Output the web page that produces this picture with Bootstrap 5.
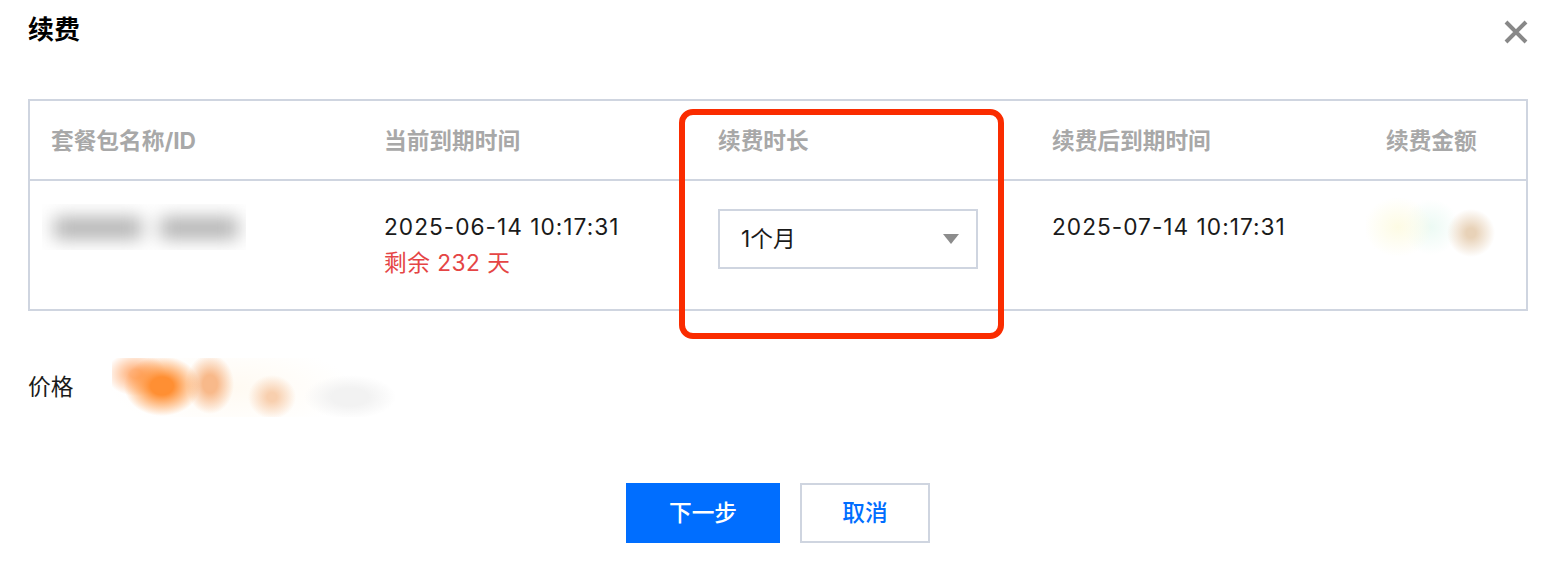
<!DOCTYPE html>
<html lang="zh-CN">
<head>
    <meta charset="UTF-8">
    <meta name="viewport" content="width=device-width, initial-scale=1.0">
    <title>续费</title>
    <link href="https://cdn.jsdelivr.net/npm/bootstrap@5.3.1/dist/css/bootstrap.min.css" rel="stylesheet">
    <style>
        body {
            font-family: Inter, "Noto Sans CJK SC", sans-serif;
            font-size: 22.7px;
            color: #1a1a1a;
            background: #fff;
            overflow: hidden;
        }
        .renew-page {
            position: relative;
            height: 562px;
            padding: 0 25px 0 28px;
        }
        .renew-head {
            height: 99px;
            padding-top: 11px;
        }
        .renew-title {
            font-size: 26px;
            line-height: 38px;
            font-weight: 700;
            color: #000;
            margin: 0;
        }
        .renew-close {
            width: 26px;
            height: 26px;
            margin-top: 8px;
            margin-right: -1px;
            padding: 0;
            border: 0;
            background: none;
            display: block;
        }
        .renew-close svg {
            display: block;
        }
        .renew-table {
            table-layout: fixed;
            width: 1500px;
            margin: 0;
            border: 2px solid #cfd5e0;
            --bs-table-border-color: #cfd5e0;
        }
        .renew-table th,
        .renew-table td {
            padding: 0 0 0 21px;
            vertical-align: top;
            border-bottom: 0;
            font-weight: 400;
        }
        .renew-table thead th {
            width: 334px;
            height: 78px;
            line-height: 77px;
            padding-top: 1px;
            font-weight: 700;
            color: #a8a8a8;
            border-bottom: 2px solid #cfd5e0;
        }
        .renew-table thead th:last-child {
            width: auto;
        }
        .renew-table tbody td {
            height: 130px;
            color: #1a1a1a;
            background: transparent;
        }
        .renew-table td.cell-date {
            padding-top: 28px;
            line-height: 36px;
            letter-spacing: 1px;
        }
        .days-left {
            color: #e54545;
            letter-spacing: 0.5px;
        }
        .blur-box {
            overflow: hidden;
        }
        .blur-fill {
            width: 100%;
            height: 100%;
        }
        .box-name {
            width: 204px;
            height: 46px;
            margin: 23px 0 0 -9px;
        }
        .fill-name {
            filter: blur(9px);
            background:
                linear-gradient(#b2b2b2, #b2b2b2) 12px 13px / 88px 22px no-repeat,
                linear-gradient(#b2b2b2, #b2b2b2) 118px 13px / 78px 22px no-repeat;
        }
        .box-amount {
            width: 132px;
            height: 64px;
            margin: 16px 0 0 -20px;
        }
        .fill-amount {
            background:
                radial-gradient(circle 24px at 105px 36px, #e8d2b8 0%, #e8d2b8 20%, rgba(232, 210, 184, 0) 100%),
                radial-gradient(ellipse 34px 30px at 32px 30px, #fdfbe4 0%, rgba(253, 251, 228, 0) 100%),
                radial-gradient(ellipse 28px 28px at 65px 30px, #ecfaf4 0%, rgba(236, 250, 244, 0) 100%);
        }
        .month-select {
            width: 260px;
            height: 60px;
            margin-top: 28px;
            padding: 0 17px 0 21px;
            border: 2px solid #cfd5e0;
            line-height: 56px;
        }
        .price-row {
            margin-top: 47px;
        }
        .price-label {
            width: 84px;
        }
        .box-price {
            width: 283px;
            height: 59px;
        }
        .fill-price {
            background:
                radial-gradient(ellipse 38px 30px at 50px 28px, #ff8f33 0%, #ff8f33 30%, rgba(255, 143, 51, 0) 100%),
                radial-gradient(ellipse 30px 22px at 24px 16px, #ffb480 0%, #ffb480 20%, rgba(255, 180, 128, 0) 100%),
                radial-gradient(ellipse 24px 30px at 98px 26px, #f8b98a 0%, #f8b98a 30%, rgba(248, 185, 138, 0) 100%),
                radial-gradient(ellipse 24px 22px at 160px 39px, #f8cfae 0%, #f8cfae 20%, rgba(248, 207, 174, 0) 100%),
                radial-gradient(ellipse 46px 22px at 238px 39px, #f2f2f2 0%, #f2f2f2 40%, rgba(242, 242, 242, 0) 100%),
                radial-gradient(ellipse 120px 44px at 120px 30px, #fffaf2 0%, rgba(255, 250, 242, 0) 100%);
        }
        .renew-actions {
            position: absolute;
            left: 626px;
            top: 483px;
            gap: 20px;
        }
        .btn-next,
        .btn-cancel {
            height: 60px;
            font-size: 22.7px;
            font-weight: 500;
            border-radius: 0;
            padding: 0;
        }
        .btn-next {
            width: 154px;
            background: #006eff;
            border: 0;
            color: #fff;
        }
        .btn-cancel {
            width: 130px;
            background: #fff;
            border: 2px solid #cfd5e0;
            color: #006eff;
        }
        .red-mark {
            position: absolute;
            left: 679px;
            top: 109px;
            width: 325px;
            height: 230px;
            border: 6px solid #fa2c00;
            border-radius: 14px;
            pointer-events: none;
        }
    </style>
</head>
<body>
    <div class="renew-page">
        <div class="renew-head d-flex justify-content-between align-items-start">
            <h5 class="renew-title">续费</h5>
            <button class="renew-close" aria-label="关闭">
                <svg width="26" height="26" viewBox="0 0 26 26"><path d="M3 3L23 23M23 3L3 23" stroke="#888" stroke-width="4" fill="none"/></svg>
            </button>
        </div>

        <table class="table renew-table">
            <thead>
                <tr>
                    <th>套餐包名称/ID</th>
                    <th>当前到期时间</th>
                    <th>续费时长</th>
                    <th>续费后到期时间</th>
                    <th>续费金额</th>
                </tr>
            </thead>
            <tbody>
                <tr>
                    <td><div class="blur-box box-name"><div class="blur-fill fill-name"></div></div></td>
                    <td class="cell-date">2025-06-14 10:17:31<div class="days-left">剩余 232 天</div></td>
                    <td>
                        <div class="month-select d-flex justify-content-between align-items-center">
                            <span>1个月</span>
                            <svg width="16" height="10" viewBox="0 0 16 10"><path d="M0 0H16L8 10Z" fill="#8c8c8c"/></svg>
                        </div>
                    </td>
                    <td class="cell-date">2025-07-14 10:17:31</td>
                    <td><div class="blur-box box-amount"><div class="blur-fill fill-amount"></div></div></td>
                </tr>
            </tbody>
        </table>

        <div class="price-row d-flex align-items-center">
            <div class="price-label">价格</div>
            <div class="blur-box box-price"><div class="blur-fill fill-price"></div></div>
        </div>

        <div class="renew-actions d-flex">
            <button class="btn btn-next">下一步</button>
            <button class="btn btn-cancel">取消</button>
        </div>

        <div class="red-mark"></div>
    </div>
    <script src="https://cdn.jsdelivr.net/npm/bootstrap@5.3.1/dist/js/bootstrap.bundle.min.js"></script>
</body>
</html>
